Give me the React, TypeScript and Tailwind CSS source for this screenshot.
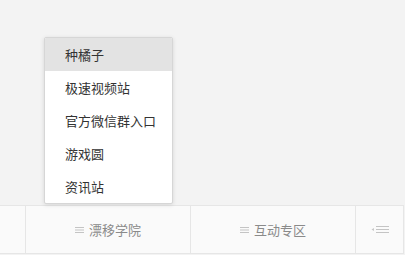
const items = ["种橘子", "极速视频站", "官方微信群入口", "游戏圆", "资讯站"];

const Lines = () => (
  <svg width="9" height="8" viewBox="0 0 9 8" className="mr-[5px]">
    <path d="M0 1.5h9M0 4h9M0 6.5h9" stroke="#c4c4c4" strokeWidth="1" />
  </svg>
);

export default function App() {
  return (
    <div
      className="relative w-[405px] h-[255px] bg-[#f3f3f3] overflow-hidden"
      style={{ fontFamily: '"Microsoft YaHei", "Noto Sans CJK SC", sans-serif' }}
    >
      <div className="h-[205px]" />
      <div className="flex h-[49px] w-[404px] bg-[#fafafa] border-t border-b border-r border-[#e6e6e6] text-[13px] text-[#8a8a8a]">
        <div className="w-[26px] border-r border-[#e6e6e6]" />
        <div className="w-[165px] flex items-center justify-center border-r border-[#e6e6e6]">
          <Lines />
          <span>漂移学院</span>
        </div>
        <div className="w-[165px] flex items-center justify-center border-r border-[#e6e6e6]">
          <Lines />
          <span>互动专区</span>
        </div>
        <div className="flex-1 flex items-center justify-center">
          <svg width="18" height="9" viewBox="0 0 18 9">
            <path d="M3 3L0.5 4.5L3 6Z" fill="#c8c8c8" />
            <path d="M5 1.5h13M5 4.5h13M5 7.5h13" stroke="#c4c4c4" strokeWidth="1" />
          </svg>
        </div>
      </div>
      <div className="absolute left-[44px] top-[37px] w-[129px] bg-white border border-[#d6d6d6] rounded-[2px] shadow-[0_1px_4px_rgba(0,0,0,0.12)] overflow-hidden">
        {items.map((t, i) => (
          <div
            key={t}
            className={`h-[33px] flex items-center pl-[20px] text-[13px] text-[#333] ${i === 0 ? "bg-[#e3e3e3]" : ""}`}
          >
            {t}
          </div>
        ))}
      </div>
    </div>
  );
}
